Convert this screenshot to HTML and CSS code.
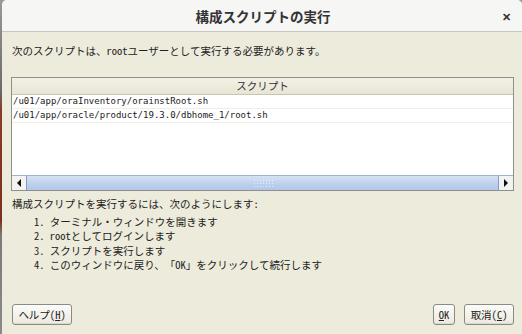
FILE: index.html
```html
<!DOCTYPE html>
<html lang="ja">
<head>
    <meta charset="UTF-8">
    <meta name="viewport" content="width=device-width, initial-scale=1.0">
    <title>構成スクリプトの実行</title>
    <link rel="stylesheet" href="styles.css">
</head>
<body>

    <div class="window">
        <div class="titlebar">
            <span class="title">構成スクリプトの実行</span>
            <span class="close">&#x2715;</span>
        </div>

        <div class="content">
            <p class="intro">次のスクリプトは、rootユーザーとして実行する必要があります。</p>

            <div class="table">
                <div class="thead">スクリプト</div>
                <div class="rows">
                    <div class="row">/u01/app/oraInventory/orainstRoot.sh</div>
                    <div class="row">/u01/app/oracle/product/19.3.0/dbhome_1/root.sh</div>
                </div>
                <div class="hscroll">
                    <div class="arrow"><span class="tri left"></span></div>
                    <div class="track"><span class="grip"></span></div>
                    <div class="arrow"><span class="tri right"></span></div>
                </div>
            </div>

            <div class="steps">
                <p class="steps-head">構成スクリプトを実行するには、次のようにします:</p>
                <ol class="step-list">
                    <li>1. ターミナル・ウィンドウを開きます</li>
                    <li>2. rootとしてログインします</li>
                    <li>3. スクリプトを実行します</li>
                    <li>4. このウィンドウに戻り、「OK」をクリックして続行します</li>
                </ol>
            </div>

            <div class="buttons">
                <button class="btn help">ヘルプ(<u>H</u>)</button>
                <div class="right-buttons">
                    <button class="btn ok"><u>O</u>K</button>
                    <button class="btn cancel">取消(<u>C</u>)</button>
                </div>
            </div>
        </div>
    </div>

</body>
</html>
```

FILE: styles.css
```css
html, body {
    margin: 0;
    height: 100%;
}
body {
    background: linear-gradient(#9a9a9a 0, #6b6b6b 90px, #8a3a28 110px, #7a3020 220px, #7a7a78 235px, #8a8a88 334px);
    font-family: "Noto Sans CJK JP", sans-serif;
    font-feature-settings: "hwid";
    font-size: 10.5px;
    color: #222;
    overflow: hidden;
}
.window {
    margin-left: 2px;
    width: 520px;
    height: 334px;
    background: #edebdc;
    border-radius: 5px 5px 0 0;
    display: flex;
    flex-direction: column;
}
.titlebar {
    height: 31px;
    background: #f6f6f5;
    border-bottom: 1px solid #c9c8c0;
    border-radius: 5px 5px 0 0;
    display: flex;
    align-items: center;
    justify-content: center;
    position: relative;
}
.title {
    font-size: 13.5px;
    font-weight: bold;
    color: #333;
    margin-left: 2px;
}
.close {
    position: absolute;
    right: 11px;
    top: 8px;
    font-size: 11px;
    font-weight: bold;
    color: #333;
}
.content {
    flex: 1;
    display: flex;
    flex-direction: column;
    padding: 0 8px 0 9px;
}
.intro {
    margin: 11px 0 0 1px;
    line-height: 15px;
}
.table {
    margin-top: 19px;
    border: 1px solid #8f908c;
    background: #fff;
    height: 112px;
    display: flex;
    flex-direction: column;
}
.thead {
    height: 16px;
    line-height: 16px;
    text-align: center;
    background: linear-gradient(#f3f1e6, #e8e5d5);
    border-bottom: 1px solid #c9c5b2;
    color: #333;
}
.rows {
    flex: 1;
}
.row {
    height: 13px;
    line-height: 13px;
    padding-left: 1px;
    border-bottom: 1px solid #f0efe4;
    font-family: "DejaVu Sans Mono", monospace;
    font-size: 9px;
    color: #222;
}
.hscroll {
    height: 14px;
    display: flex;
    border-top: 1px solid #9fb3d4;
}
.arrow {
    width: 14px;
    background: #f3f3f1;
    border-right: 1px solid #7f9dc9;
    display: flex;
    align-items: center;
    justify-content: center;
}
.arrow:last-child {
    border-right: none;
    border-left: 1px solid #7f9dc9;
}
.tri {
    width: 0;
    height: 0;
    border-top: 4px solid transparent;
    border-bottom: 4px solid transparent;
}
.tri.left {
    border-right: 4px solid #111;
}
.tri.right {
    border-left: 4px solid #111;
}
.track {
    flex: 1;
    background: linear-gradient(#d6e2f4, #bccfec 60%, #b2c7e8);
    display: flex;
    align-items: center;
    justify-content: center;
}
.grip {
    width: 20px;
    height: 8px;
    background-image: radial-gradient(circle, #e8eefa 0.8px, transparent 1px);
    background-size: 3px 3px;
}
.steps {
    margin-top: 5px;
    padding-left: 1px;
}
.steps-head {
    margin: 0 0 4px;
    line-height: 15px;
}
.step-list {
    list-style: none;
    margin: 0;
    padding-left: 22px;
    line-height: 14.3px;
}
.buttons {
    margin-top: auto;
    margin-bottom: 9px;
    display: flex;
    justify-content: space-between;
    align-items: center;
}
.right-buttons {
    display: flex;
    gap: 9px;
}
.btn {
    height: 21px;
    padding: 0;
    white-space: nowrap;
    font-family: inherit;
    font-feature-settings: "hwid";
    font-size: 10.5px;
    color: #222;
    background: linear-gradient(#fbfbf8, #ece9df);
    border: 1px solid #8b8b86;
    border-radius: 3px;
    box-shadow: inset 0 -1px 0 #dcd9cc;
}
.help {
    width: 60px;
    margin-left: 1px;
}
.ok {
    width: 22px;
}
.cancel {
    width: 50px;
}
u {
    text-decoration: underline;
}
```
